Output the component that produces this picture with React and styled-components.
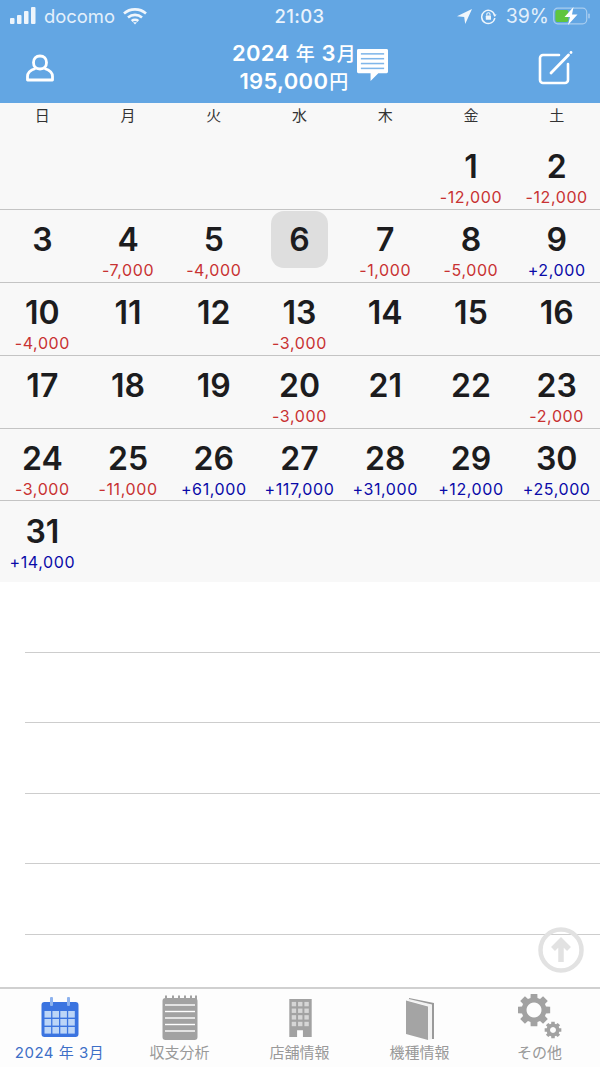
import React from "react";
import styled, { createGlobalStyle } from "styled-components";

const Global = createGlobalStyle`
  html, body { margin: 0; padding: 0; background: #fff; }
  body { font-family: Inter, "Noto Sans CJK JP", sans-serif; }
`;
const Page = styled.div`
  width: 600px; height: 1067px; display: flex; flex-direction: column;
  overflow: hidden; position: relative; background: #fff;
`;
const Top = styled.header`
  height: 103px; flex: none; background: #63a6e3; color: #fff; display: flex; flex-direction: column;
`;
const StatusBar = styled.div`
  height: 32px; display: grid; grid-template-columns: 1fr auto 1fr; align-items: center; padding: 0 9px 0 10px;
  font-size: 18.4px; color: #e4f0fb;
`;
const StatusSide = styled.div`
  display: flex; align-items: center; gap: ${p => p.$gap || 6}px;
  justify-content: ${p => (p.$end ? "flex-end" : "flex-start")};
`;
const Clock = styled.div`
  font-size: 18.5px; letter-spacing: 0.4px; color: #eaf3fc; font-weight: 500; margin-left: -2px;
`;
const Carrier = styled.span`
  margin-right: 2px;
`;
const Percent = styled.span`
  font-size: 19.5px; margin: 0 -4px 0 1px;
`;
const NavBar = styled.div`
  flex: 1; display: grid; grid-template-columns: 1fr auto 1fr; align-items: center; padding: 0 27px 0 26px;
`;
const NavTitle = styled.div`
  display: flex; flex-direction: column; align-items: center; font-size: 22px; font-weight: 600; line-height: 27px;
  letter-spacing: 0.3px; position: relative; margin: 1px 0 0 -10px;
`;
const Small = styled.span`
  font-size: 19px; margin: 0 1px; font-weight: 500;
`;
const NavNote = styled.svg`
  position: absolute; left: 125px; top: 9px;
`;
const NavRight = styled.div`
  justify-self: end; display: flex;
`;
const WeekHead = styled.div`
  height: 34px; flex: none; display: grid; grid-template-columns: repeat(7, 1fr); background: #f8f8f8;
`;
const WeekDay = styled.div`
  text-align: center; font-size: 15px; line-height: 24px; color: #333; font-family: "Noto Sans CJK JP", sans-serif;
  margin-left: -1px;
`;
const Week = styled.div`
  height: ${p => p.$h || 72}px; flex: none; box-sizing: content-box; display: grid; grid-template-columns: repeat(7, 1fr);
  background: #f8f8f8; padding-top: ${p => p.$pad || 0}px;
  border-bottom: ${p => (p.$last ? "none" : "1px solid #c4c4c4")};
`;
const Cell = styled.div`
  display: flex; flex-direction: column; align-items: center; position: relative; min-width: 0;
`;
const Today = styled.div`
  position: absolute; left: 14px; top: 1px; width: 57px; height: 57px; border-radius: 13px; background: #dedede;
`;
const Num = styled.div`
  position: relative; font-size: 32px; font-weight: 600; line-height: 38px; margin: 11px 0 0 -1px; color: #1c1c1e; height: 38px;
`;
const Amount = styled.div`
  font-size: 16px; line-height: 18px; margin: 2px 0 0 -1px; letter-spacing: 0.6px; white-space: nowrap;
  color: ${p => (p.$plus ? "#0a0aa8" : "#c83232")};
`;
const Notes = styled.div`
  flex: 1; display: flex; flex-direction: column; padding: 70px 0 0 25px; gap: 69.4px; position: relative;
`;
const Rule = styled.div`
  height: 1px; background: #cdcdcd; flex: none;
`;
const ScrollTop = styled.svg`
  position: absolute; right: 16px; bottom: 14px;
`;
const TabBar = styled.nav`
  height: 78px; flex: none; display: grid; grid-template-columns: repeat(5, 1fr); border-top: 2px solid #d0d0d0; background: #fdfdfd;
`;
const Tab = styled.div`
  display: flex; flex-direction: column; align-items: center; position: relative;
`;
const TabIcon = styled.div`
  height: ${p => 48 - (p.$lift || 0)}px; display: flex; align-items: flex-end; justify-content: center;
  margin: 3px 0 ${p => p.$lift || 0}px;
`;
const TabLabel = styled.div`
  font-size: 15px; line-height: 18px; margin-top: 4px; letter-spacing: ${p => (p.$active ? 0.5 : 0)}px;
  color: ${p => (p.$active ? "#3d6fc7" : "#999")};
  white-space: nowrap; margin-left: -1px;
`;

const Signal = () => (
  <svg width="28" height="18" viewBox="0 0 28 18" fill="#eef5fc">
    <rect x="0" y="11" width="4.5" height="6" rx="1" /><rect x="7" y="8" width="4.5" height="9" rx="1" />
    <rect x="14" y="4" width="4.5" height="13" rx="1" /><rect x="21" y="0" width="4.5" height="17" rx="1" />
  </svg>
);
const Wifi = () => (
  <svg width="24" height="18" viewBox="0 0 24 18" fill="none" stroke="#f0f6fc" strokeWidth="2.6">
    <path d="M1 6.5C7 1 17 1 23 6.5" /><path d="M5 10.5C9 7 15 7 19 10.5" /><path d="M8.7 14C10.5 12.5 13.5 12.5 15.3 14" />
    <path d="M10 15.2L12 17.6L14 15.2Z" fill="#f0f6fc" stroke="none" />
  </svg>
);
const Locate = () => (
  <svg width="15" height="15" viewBox="0 0 15 15" fill="#f2f7fc"><path d="M15 0L0 7.3L7.2 8L8.2 15Z" /></svg>
);
const RotLock = () => (
  <svg width="17" height="17" viewBox="0 0 17 17" fill="none" stroke="#eef5fc" strokeWidth="1.5">
    <path d="M14.6 7A6.6 6.6 0 1 0 14.8 10" />
    <path d="M13 6.5L16.6 6.5L14.8 9Z" fill="#eef5fc" stroke="none" />
    <rect x="5.8" y="7.6" width="5.2" height="4.2" rx="0.6" fill="#eef5fc" stroke="none" />
    <path d="M6.8 7.6V6.3A1.6 1.6 0 0 1 10 6.3V7.6" strokeWidth="1.1" />
  </svg>
);
const Battery = () => (
  <svg width="38" height="18" viewBox="0 0 38 18">
    <rect x="0.7" y="1.2" width="33" height="15.6" rx="4" fill="none" stroke="#a8cdf0" strokeWidth="1.2" />
    <rect x="2.4" y="3" width="13" height="12" rx="2" fill="#5fc53f" />
    <rect x="35.2" y="6.5" width="1.6" height="5" rx="0.8" fill="#a8cdf0" />
    <path d="M20.5 0L11.5 10H17L15 18L24.5 7.5H19Z" fill="#fff" />
  </svg>
);
const User = () => (
  <svg width="28" height="28" viewBox="0 0 28 28" fill="none" stroke="#fff" strokeWidth="2.8" strokeLinejoin="round">
    <path d="M7.5 8.5C7.5 4.5 10 2 14 2s6.500 2.500 6.500 6.500c0 3.500-2 6.500-6.500 6.500s-6.500-3-6.500-6.500Z" />
    <path d="M9.5 14.5C4.5 16 1.500 18.500 1.500 22.500V26H26.500V22.500C26.500 18.500 23.500 16 18.500 14.500" />
  </svg>
);
const Memo = () => (
  <NavNote width="31" height="32" viewBox="0 0 32 33">
    <path d="M1.5 0H30.5A1.5 1.5 0 0 1 32 1.5V23.5A1.5 1.5 0 0 1 30.5 25H22L14 33V25H1.5A1.5 1.5 0 0 1 0 23.5V1.5A1.5 1.5 0 0 1 1.5 0Z" fill="#fff" />
    <g stroke="#7fb6ea" strokeWidth="1.6">
      <path d="M4 5H28" /><path d="M4 10H28" /><path d="M4 15H28" /><path d="M4 20H28" />
    </g>
  </NavNote>
);
const Compose = () => (
  <svg width="35" height="35" viewBox="0 0 35 35" fill="none" stroke="#fff" strokeLinecap="round">
    <path d="M21 5H5A3 3 0 0 0 2 8V30A3 3 0 0 0 5 33H27A3 3 0 0 0 30 30V14" strokeWidth="2.6" />
    <path d="M13 23L30.5 5" strokeWidth="2.8" />
    <circle cx="33" cy="2.5" r="1.4" fill="#fff" stroke="none" />
  </svg>
);
const ArrowUp = () => (
  <ScrollTop width="46" height="46" viewBox="0 0 46 46" fill="none" stroke="#e2e2e2">
    <circle cx="23" cy="23" r="20.5" strokeWidth="4.5" />
    <path d="M23 35V15M15 22L23 14L31 22" strokeWidth="5.5" />
  </ScrollTop>
);
const CalendarIcon = () => (
  <svg width="38" height="40" viewBox="0 0 38 40">
    <rect x="0.5" y="5" width="37" height="35" rx="3" fill="#3b74e0" />
    <rect x="9" y="0" width="3" height="9" rx="1" fill="#8db2ee" /><rect x="26" y="0" width="3" height="9" rx="1" fill="#8db2ee" />
    {[0, 1, 2].map(r => [0, 1, 2, 3].map(c => (
      <rect key={`${r}-${c}`} x={3.5 + c * 7.9} y={14 + r * 8} width="6.6" height="6.6" fill="#bcd5f7" />
    )))}
  </svg>
);
const NotebookIcon = () => (
  <svg width="36" height="45" viewBox="0 0 36 45">
    <rect x="0.5" y="3" width="35" height="42" rx="3" fill="#a2a2a2" />
    {[3, 10, 16, 22, 28, 33].map(x => <rect key={x} x={x} y="0.5" width="2" height="4" fill="#a2a2a2" />)}
    <g stroke="#fff" strokeWidth="1.4">
      {[10, 16.5, 23, 29.5, 36].map(y => <path key={y} d={`M3 ${y}H33`} />)}
    </g>
  </svg>
);
const BuildingIcon = () => (
  <svg width="23" height="38" viewBox="0 0 23 39">
    <path d="M0 0H23V39H14V32H8V39H0Z" fill="#a2a2a2" />
    {[0, 1, 2, 3].map(r => [0, 1, 2].map(c => (
      <rect key={`${r}-${c}`} x={2.5 + c * 6.5} y={3 + r * 6.8} width="4.5" height="4.5" fill="#d6d6d6" />
    )))}
  </svg>
);
const BookIcon = () => (
  <svg width="30" height="42" viewBox="0 0 30 42">
    <path d="M4 0L29 5V41H27V7L4 2Z" fill="#9a9a9a" />
    <path d="M2 2L4 1L27 6.5V41L23 42V8Z" fill="#f2f2f2" />
    <path d="M1 2.5L23 8.5V42L1 36Z" fill="#a4a4a4" />
  </svg>
);
const gearPath = (cx, cy, outer, inner, teeth) => {
  let d = "";
  const step = (Math.PI * 2) / teeth;
  for (let i = 0; i < teeth; i++) {
    const a = i * step - Math.PI / 2;
    const pts = [[a - step * 0.26, outer], [a + step * 0.26, outer], [a + step * 0.36, inner], [a + step * 0.64, inner]];
    pts.forEach(([an, r], j) => {
      d += `${i === 0 && j === 0 ? "M" : "L"}${(cx + r * Math.cos(an)).toFixed(2)} ${(cy + r * Math.sin(an)).toFixed(2)}`;
    });
  }
  return d + "Z";
};
const GearsIcon = () => (
  <svg width="44" height="46" viewBox="0 0 44 46">
    <path fillRule="evenodd" fill="#a2a2a2" d={`${gearPath(16, 16, 16.5, 12.5, 8)}M16 8.5a7.5 7.5 0 1 0 0.01 0Z`} />
    <path fillRule="evenodd" fill="#a2a2a2" d={`${gearPath(35, 36, 8.5, 6.5, 8)}M35 33a3 3 0 1 0 0.01 0Z`} />
  </svg>
);

const weeks = [
  { h: 72, days: [null, null, null, null, null, [1, "-12,000"], [2, "-12,000"]] },
  { days: [[3], [4, "-7,000"], [5, "-4,000"], [6, null, true], [7, "-1,000"], [8, "-5,000"], [9, "+2,000"]] },
  { days: [[10, "-4,000"], [11], [12], [13, "-3,000"], [14], [15], [16]] },
  { days: [[17], [18], [19], [20, "-3,000"], [21], [22], [23, "-2,000"]] },
  { h: 71, days: [[24, "-3,000"], [25, "-11,000"], [26, "+61,000"], [27, "+117,000"], [28, "+31,000"], [29, "+12,000"], [30, "+25,000"]] },
  { h: 80, pad: 1, last: true, days: [[31, "+14,000"], null, null, null, null, null, null] },
];
const tabs = [
  { icon: <CalendarIcon />, label: "2024 年 3月", active: true, lift: 3 },
  { icon: <NotebookIcon />, label: "収支分析" },
  { icon: <BuildingIcon />, label: "店舗情報", lift: 3 },
  { icon: <BookIcon />, label: "機種情報" },
  { icon: <GearsIcon />, label: "その他" },
];

export default function App() {
  return (
    <Page>
      <Global />
      <Top>
        <StatusBar>
          <StatusSide $gap={6}><Signal /><Carrier>docomo</Carrier><Wifi /></StatusSide>
          <Clock>21:03</Clock>
          <StatusSide $end $gap={8}><Locate /><RotLock /><Percent>39%</Percent><Battery /></StatusSide>
        </StatusBar>
        <NavBar>
          <User />
          <NavTitle>
            <div>2024<Small> 年 </Small>3<Small>月</Small></div>
            <div>195,000<Small>円</Small></div>
            <Memo />
          </NavTitle>
          <NavRight><Compose /></NavRight>
        </NavBar>
      </Top>
      <WeekHead>
        {["日", "月", "火", "水", "木", "金", "土"].map(d => <WeekDay key={d}>{d}</WeekDay>)}
      </WeekHead>
      {weeks.map((w, i) => (
        <Week key={i} $h={w.h} $pad={w.pad} $last={w.last}>
          {w.days.map((d, j) => (
            <Cell key={j}>
              {d && d[2] && <Today />}
              {d && <Num>{d[0]}</Num>}
              {d && d[1] && <Amount $plus={d[1][0] === "+"}>{d[1]}</Amount>}
            </Cell>
          ))}
        </Week>
      ))}
      <Notes>
        {[0, 1, 2, 3, 4].map(i => <Rule key={i} />)}
        <ArrowUp />
      </Notes>
      <TabBar>
        {tabs.map(t => (
          <Tab key={t.label}>
            <TabIcon $lift={t.lift}>{t.icon}</TabIcon>
            <TabLabel $active={t.active}>{t.label}</TabLabel>
          </Tab>
        ))}
      </TabBar>
    </Page>
  );
}
